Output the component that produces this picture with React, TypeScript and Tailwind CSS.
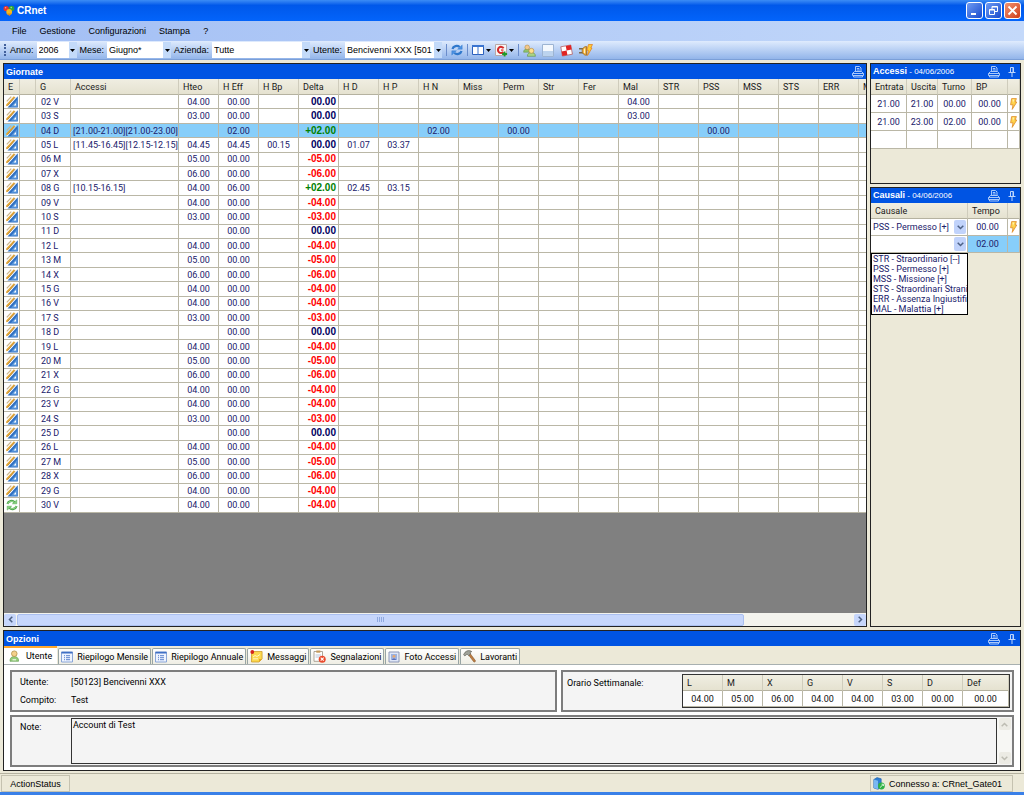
import { useState } from 'react';
import type { ReactNode } from 'react';

type Tone = 'navy' | 'red' | 'green';

interface Day {
  day: string;
  punches?: string;
  teo?: string;
  eff: string;
  delta: string;
  extra?: Record<string, string>;
}

const HEADERS = ['Hteo', 'H Eff', 'H Bp', 'Delta', 'H D', 'H P', 'H N', 'Miss', 'Perm', 'Str', 'Fer', 'Mal', 'STR', 'PSS', 'MSS', 'STS', 'ERR', 'M'];

const DAYS: Day[] = [
  { day: '02 V', teo: '04.00', eff: '00.00', delta: '00.00', extra: { Mal: '04.00' } },
  { day: '03 S', teo: '03.00', eff: '00.00', delta: '00.00', extra: { Mal: '03.00' } },
  { day: '04 D', punches: '[21.00-21.00][21.00-23.00]', eff: '02.00', delta: '+02.00', extra: { 'H N': '02.00', Perm: '00.00', PSS: '00.00' } },
  { day: '05 L', punches: '[11.45-16.45][12.15-12.15]', teo: '04.45', eff: '04.45', delta: '00.00', extra: { 'H Bp': '00.15', 'H D': '01.07', 'H P': '03.37' } },
  { day: '06 M', teo: '05.00', eff: '00.00', delta: '-05.00' },
  { day: '07 X', teo: '06.00', eff: '00.00', delta: '-06.00' },
  { day: '08 G', punches: '[10.15-16.15]', teo: '04.00', eff: '06.00', delta: '+02.00', extra: { 'H D': '02.45', 'H P': '03.15' } },
  { day: '09 V', teo: '04.00', eff: '00.00', delta: '-04.00' },
  { day: '10 S', teo: '03.00', eff: '00.00', delta: '-03.00' },
  { day: '11 D', eff: '00.00', delta: '00.00' },
  { day: '12 L', teo: '04.00', eff: '00.00', delta: '-04.00' },
  { day: '13 M', teo: '05.00', eff: '00.00', delta: '-05.00' },
  { day: '14 X', teo: '06.00', eff: '00.00', delta: '-06.00' },
  { day: '15 G', teo: '04.00', eff: '00.00', delta: '-04.00' },
  { day: '16 V', teo: '04.00', eff: '00.00', delta: '-04.00' },
  { day: '17 S', teo: '03.00', eff: '00.00', delta: '-03.00' },
  { day: '18 D', eff: '00.00', delta: '00.00' },
  { day: '19 L', teo: '04.00', eff: '00.00', delta: '-04.00' },
  { day: '20 M', teo: '05.00', eff: '00.00', delta: '-05.00' },
  { day: '21 X', teo: '06.00', eff: '00.00', delta: '-06.00' },
  { day: '22 G', teo: '04.00', eff: '00.00', delta: '-04.00' },
  { day: '23 V', teo: '04.00', eff: '00.00', delta: '-04.00' },
  { day: '24 S', teo: '03.00', eff: '00.00', delta: '-03.00' },
  { day: '25 D', eff: '00.00', delta: '00.00' },
  { day: '26 L', teo: '04.00', eff: '00.00', delta: '-04.00' },
  { day: '27 M', teo: '05.00', eff: '00.00', delta: '-05.00' },
  { day: '28 X', teo: '06.00', eff: '00.00', delta: '-06.00' },
  { day: '29 G', teo: '04.00', eff: '00.00', delta: '-04.00' },
  { day: '30 V', teo: '04.00', eff: '00.00', delta: '-04.00' },
];

const WEEK = [
  ['L', '04.00'], ['M', '05.00'], ['X', '06.00'], ['G', '04.00'],
  ['V', '04.00'], ['S', '03.00'], ['D', '00.00'], ['Def', '00.00'],
];

const CAUSALI = [
  'STR - Straordinario [--]',
  'PSS - Permesso [+]',
  'MSS - Missione [+]',
  'STS - Straordinari Strani',
  'ERR - Assenza Ingiustifi',
  'MAL - Malattia [+]',
];

const TONES: Record<Tone, string> = {
  navy: 'text-[#000060]',
  red: 'text-[#ff0000]',
  green: 'text-[#008000]',
};

function toneOf(delta: string): Tone {
  if (delta.startsWith('-')) return 'red';
  if (delta.startsWith('+')) return 'green';
  return 'navy';
}

/* ---------- icons ---------- */

const LogoIcon = () => (
  <svg width="12" height="12" viewBox="0 0 12 12">
    <circle cx="3.2" cy="3.6" r="2.7" fill="#e8352a" />
    <circle cx="8.6" cy="3.4" r="2.7" fill="#2fa53a" />
    <circle cx="6.2" cy="7" r="2.9" fill="#f5b81c" />
    <path d="M4 8.5h4.5L6.4 11z" fill="#e08a10" />
    <circle cx="2.6" cy="2.8" r=".8" fill="#ff9c8c" />
    <circle cx="8.2" cy="2.6" r=".8" fill="#9fe08c" />
  </svg>
);

const EditIcon = () => (
  <svg width="12" height="12" viewBox="0 0 12 12" className="block">
    <path d="M11.8.3v11.300H1.500z" fill="#2f70c2" />
    <path d="M11 4v6.800H5z" fill="#5b98dc" />
    <path d="M10 7v2.600H7.600z" fill="#fff" />
    <path d="m.3 9.800 9-9.500.7.700-8.500 10z" fill="#fff" />
    <path d="M.2 8.400 7.800.3l1.300 1-7.400 8.500-1.500.4z" fill="#e5a630" />
    <path d="M1.700 9.600 9 1.400" stroke="#8a6434" strokeWidth=".6" />
    <path d="M.3 5 4.800.3l.9.700L1.200 5.700z" fill="#c9b48c" />
  </svg>
);

const RecycleIcon = () => (
  <svg width="12" height="12" viewBox="0 0 12 12" className="block" fill="none" stroke="#4fa84f">
    <path d="M1.5 5C2.2 2 6.4.9 8.6 3.2M10.5 7C9.8 10 5.6 11.1 3.4 8.8" strokeWidth="2.2" />
    <path d="M1.8 4.9C2.6 2.4 6.2 1.4 8.3 3.4M10.2 7.1C9.4 9.6 5.8 10.6 3.7 8.6" stroke="#a5e09a" strokeWidth="1" />
    <path d="M6.4 4.8h4.4V.9zM5.6 7.2H1.2v3.9z" fill="#86cf7c" strokeWidth=".5" />
  </svg>
);

const RefreshIcon = () => (
  <svg width="12" height="12" viewBox="0 0 12 12" fill="none" stroke="#2f78cc">
    <path d="M1.5 5C2.2 1.900 6.400 1 8.700 3M10.500 7C9.800 10.100 5.600 11 3.300 9" strokeWidth="2.200" />
    <path d="M6.600 5.200h4.600V.9zM5.400 6.800H.8v4.300z" fill="#4b90e2" strokeWidth=".4" />
  </svg>
);

const PrinterIcon = () => (
  <svg width="12" height="12" viewBox="0 0 12 12" fill="none" stroke="#a9c8fa" strokeWidth="1">
    <path d="M3.5 5.5v-5h4l1.500 1.500v3.500M4.800 2.500h2.500M4.800 4h3" />
    <path d="M2.500 5.500h7l2 2v2h-11v-2zM.5 7.500h11M1.500 9.500v1.500h9V9.500" />
  </svg>
);

const PinIcon = () => (
  <svg width="8" height="12" viewBox="0 0 8 12" fill="none" stroke="#bcd5fc">
    <path d="M2.500 1.500h3v5h-3zM5 2v4M.5 6.500h7M4 7v4" />
  </svg>
);

const BoltIcon = () => (
  <svg width="9" height="12" viewBox="0 0 9 12" className="block">
    <path d="M2.600.6h4.800L6.200 4h1.600L3.200 11.400l.8-4.600H1.600z" fill="#ffd24a" stroke="#dd8a2a" strokeWidth=".8" />
    <path d="M3.500 1.500h1.800L4 5z" fill="#fff3b0" />
  </svg>
);

const ColumnsIcon = () => (
  <svg width="12" height="12" viewBox="0 0 12 12">
    <path d="M.5 1.500h11v9H.5z" fill="#fff" stroke="#2b60bd" />
    <path d="M0 1h12v2H0zM5.500 3h1v8h-1z" fill="#3a74d0" />
  </svg>
);

const ReportIcon = () => (
  <svg width="13" height="13" viewBox="0 0 13 13">
    <path d="M.5.5h11v11H.5z" fill="#f6f6f6" stroke="#b8a8a8" />
    <path d="M8.600 4.200A3.100 3.100 0 1 0 8.400 8" fill="none" stroke="#d42a2a" strokeWidth="2" />
    <path d="M6 5.200h2.500V7H6z" fill="#e66" />
    <path d="M9.600 7.500v5M7.100 10h5" stroke="#1f9a2c" strokeWidth="1.800" />
  </svg>
);

const UsersIcon = () => (
  <svg width="13" height="13" viewBox="0 0 13 13">
    <path d="M.6 8.200C.6 5.500 2.500 5 4.200 5s3.600.6 3.600 3.200z" fill="#8fc36b" stroke="#5f8f45" strokeWidth=".5" />
    <circle cx="4.200" cy="3.300" r="2.300" fill="#f2c98c" stroke="#b0803a" strokeWidth=".5" />
    <path d="M4.400 12.300c0-3 2-3.800 4-3.800s4 .8 4 3.800z" fill="#a9d486" stroke="#5f8f45" strokeWidth=".6" />
    <circle cx="8.400" cy="6.800" r="2.500" fill="#ffe08c" stroke="#b0803a" strokeWidth=".6" />
  </svg>
);

const PageIcon = () => (
  <svg width="12" height="13" viewBox="0 0 12 13">
    <path d="M.5.5h11v12H.5z" fill="#f4f8fd" stroke="#9db4d2" />
    <path d="M1 7h10v5H1z" fill="#bcd3ee" />
  </svg>
);

const DiceIcon = () => (
  <svg width="13" height="13" viewBox="0 0 13 13">
    <path d="m.8 2.800 10-1.800 1.600 9.200-10 1.800z" fill="#fff" stroke="#a33" strokeWidth=".6" />
    <path d="m5.800 1.900 5-.9.800 4.600-5 .9zM1.600 7.400l5-.9.800 4.600-5 .9z" fill="#e02424" />
  </svg>
);

const PlugIcon = () => (
  <svg width="14" height="13" viewBox="0 0 14 13">
    <path d="M0 4.800h4M0 8.800h4" stroke="#7a6a50" strokeWidth="1.400" />
    <path d="M7.500 2.500a4.300 4.300 0 1 0 0 8.800z" fill="#f0b03c" stroke="#9a6820" strokeWidth=".8" />
    <path d="M5.500 4.500v4.700" stroke="#fff0c0" strokeWidth="1.200" />
    <path d="M9.500.5h4L11.800 4H13l-4.500 7.500.8-5.200H7.800z" fill="#ffcc33" stroke="#e07a1c" strokeWidth=".7" />
  </svg>
);

const UserIcon = () => (
  <svg width="11" height="12" viewBox="0 0 11 12">
    <path d="M1 11.300C.8 7.600 3 6.600 5.200 6.600s4.600 1 4.300 4.700z" fill="#96cc7c" stroke="#5b9a48" strokeWidth=".6" />
    <circle cx="5.300" cy="3.700" r="2.800" fill="#f4d08c" stroke="#a8883c" strokeWidth=".7" />
    <path d="M3.500 9.300h3.600v1H3.500z" fill="#fff" />
  </svg>
);

const ListIcon = () => (
  <svg width="12" height="12" viewBox="0 0 12 12">
    <path d="M.5 1h11v10H.5z" fill="#eef4ff" stroke="#8aa6d8" />
    <path d="M.5.800h11v1.700H.5z" fill="#3f6fc4" />
    <path d="M3 4.700h1M3 6.700h1M3 8.700h1M5 4.700h4M5 6.700h4M5 8.700h4" stroke="#5a82cc" />
  </svg>
);

const NoteIcon = () => (
  <svg width="13" height="13" viewBox="0 0 13 13">
    <path d="M1.500 1.500h10.600v7.400L9 12H1.500z" fill="#fbd84e" stroke="#c8941e" strokeWidth=".7" />
    <path d="M12 9 9 12V9z" fill="#e6a626" />
    <path d="M3 7 5 5.500 7 6.500l3-2M3 8.800h5" stroke="#fff6c8" fill="none" />
    <circle cx="2.300" cy="2" r="1.900" fill="#d4231c" />
  </svg>
);

const ClipboardIcon = () => (
  <svg width="13" height="13" viewBox="0 0 13 13">
    <path d="M1 1.500h8.500v9.800H1z" fill="#fff" stroke="#9a8f80" strokeWidth=".8" />
    <path d="M3.300.500h4v2.200h-4z" fill="#c59a5a" />
    <path d="M2.500 5h5.500M2.500 7h4" stroke="#b8c4d8" />
    <circle cx="9.200" cy="9.200" r="3.500" fill="#ea4a2c" />
    <path d="m7.700 7.700 3 3M10.700 7.700l-3 3" stroke="#fff" strokeWidth="1.100" />
  </svg>
);

const PhotoIcon = () => (
  <svg width="12" height="12" viewBox="0 0 12 12">
    <path d="M1 1h10v10H1z" fill="#dfe7f8" stroke="#8d98b8" />
    <path d="M3 3h6v6H3z" fill="#9db2e0" />
    <circle cx="6" cy="5.300" r="1.400" fill="#e8a870" />
    <path d="M3.800 9C4 6.900 8 6.900 8.200 9z" fill="#5b6fb8" />
  </svg>
);

const HammerIcon = () => (
  <svg width="13" height="13" viewBox="0 0 13 13">
    <path d="m5 4.200 1.600-1.400 5.800 7.800c.4 1-.9 2-1.700 1.200z" fill="#bd7d42" stroke="#7b4d22" strokeWidth=".5" />
    <path d="M.6 4.600 2 2.300C4 .3 6.800.1 8.800 1.600L7 2.600l.6 1.200-2 1.900-1.500-1.600L1.800 6z" fill="#9fa29a" stroke="#55574f" strokeWidth=".6" />
  </svg>
);

const ServerIcon = () => (
  <svg width="12" height="13" viewBox="0 0 12 13">
    <path d="M.800 2.500 4 .600l4.200 1.200v8.400L5 12.300.8 11z" fill="#2f7fd4" stroke="#1e5ca8" strokeWidth=".6" />
    <path d="M.8 2.500 5 3.700v8.600L.8 11z" fill="#7ab8f2" />
    <circle cx="8.400" cy="9" r="3.400" fill="#2fb044" />
    <path d="m6.900 10.700 3.400-3.400M8.600 7.200h1.800V9" stroke="#d8f7d8" fill="none" />
  </svg>
);

const Caret = () => (
  <svg width="5" height="3" viewBox="0 0 5 3"><path d="M0 0h5L2.500 3z" fill="#000" /></svg>
);

const Chevron = ({ className = '', color = '#4d6185' }: { className?: string; color?: string }) => (
  <svg width="7" height="5" viewBox="0 0 7 5" className={className}>
    <path d="m.7.7 2.800 2.800L6.300.7" fill="none" stroke={color} strokeWidth="1.500" />
  </svg>
);

/* ---------- building blocks ---------- */

function PaneTitle({ title, date, pin = true }: { title: string; date?: string; pin?: boolean }) {
  return (
    <div className="flex h-[15px] shrink-0 items-center gap-2 bg-[#0054e3] pr-[2px] pl-[2px] text-white">
      <h2 className="flex-1 text-[9px] leading-3 font-bold whitespace-nowrap">
        {title}
        {date && <span className="text-[8px] font-normal"> - {date}</span>}
      </h2>
      <button aria-label="Stampa"><PrinterIcon /></button>
      {pin && <button aria-label="Blocca" className="mr-[2px]"><PinIcon /></button>}
    </div>
  );
}

function ToolbarSelect({ label, value, width }: { label: string; value: string; width: string }) {
  return (
    <label className="flex h-4 items-center gap-[3px] whitespace-nowrap">
      {label}
      <span className={`flex h-4 items-center bg-white ${width}`}>
        <select className="h-4 min-w-0 flex-1 appearance-none bg-white pl-[2px] leading-4 outline-none">
          <option>{value}</option>
        </select>
        <span className="pointer-events-none flex h-4 w-2 shrink-0 items-center justify-center bg-[#c3daf9]"><Caret /></span>
      </span>
    </label>
  );
}

function CausaleSelect({ value, label }: { value: string; label: string }) {
  return (
    <div className="flex h-full items-center">
      <select aria-label={label} defaultValue={value} className="h-4 min-w-0 flex-1 appearance-none bg-white pl-[2px] leading-4 outline-none">
        <option>{value}</option>
      </select>
      <span className="pointer-events-none mr-[1px] flex h-[14px] w-3 shrink-0 items-center justify-center rounded-[2px] bg-[#c1d3fb]"><Chevron /></span>
    </div>
  );
}

const Separator = () => <span className="mx-1 h-3 w-px bg-[#6a8ccb]" />;

const SMALL = 'font-[Roboto,Arial,sans-serif] text-[9px]';
const TH = 'border-r border-b border-r-[#cfccbc] border-b-[#b5b2a0] bg-linear-to-b from-[#f0eee2] to-[#e5e2d0] p-0 pl-1 text-left font-normal text-[#1a1a1a] overflow-hidden';
const TD = 'border-r border-b border-[#bab7a6] p-0 overflow-hidden';

function DaysTable() {
  return (
    <table className={`${SMALL} h-[434px] w-[895px] table-fixed border-separate border-spacing-0 leading-3 whitespace-nowrap text-[#20206a]`}>
      <colgroup>
        <col className="w-4" /><col className="w-4" /><col className="w-[35px]" /><col className="w-[108px]" />
        {HEADERS.map(h => <col key={h} className="w-10" />)}
      </colgroup>
      <thead>
        <tr className="h-4">
          <th className={TH}>E</th><th className={TH} /><th className={TH}>G</th><th className={TH}>Accessi</th>
          {HEADERS.map(h => <th key={h} className={TH}>{h}</th>)}
        </tr>
      </thead>
      <tbody>
        {DAYS.map(d => (
          <tr key={d.day} className={d.day === '04 D' ? 'bg-[#87cefa]' : 'bg-white'}>
            <td className={`${TD} pl-[2px]`}>{d.day === '30 V' ? <RecycleIcon /> : <EditIcon />}</td>
            <td className={TD} />
            <td className={`${TD} pl-[5px]`}>{d.day}</td>
            <td className={`${TD} pl-[2px]`}>{d.punches}</td>
            {HEADERS.map(h => {
              if (h === 'Delta') {
                return <td key={h} className={`${TD} pr-[2px] text-right font-['Liberation_Sans',Arial,sans-serif] text-[10px] font-bold ${TONES[toneOf(d.delta)]}`}>{d.delta}</td>;
              }
              const v = h === 'Hteo' ? d.teo : h === 'H Eff' ? d.eff : d.extra?.[h];
              return <td key={h} className={`${TD} text-center`}>{v}</td>;
            })}
          </tr>
        ))}
      </tbody>
    </table>
  );
}

const TABS: { label: string; icon: ReactNode }[] = [
  { label: 'Utente', icon: <UserIcon /> },
  { label: 'Riepilogo Mensile', icon: <ListIcon /> },
  { label: 'Riepilogo Annuale', icon: <ListIcon /> },
  { label: 'Messaggi', icon: <NoteIcon /> },
  { label: 'Segnalazioni', icon: <ClipboardIcon /> },
  { label: 'Foto Accessi', icon: <PhotoIcon /> },
  { label: 'Lavoranti', icon: <HammerIcon /> },
];

const BOX = 'border-2 border-[#7d7d7d] bg-[#f4f4f4]';
const WINBTN = 'flex h-[17px] w-[17px] items-center justify-center rounded-[3px] border border-white';

export default function App() {
  const [tab, setTab] = useState('Utente');
  const [notes, setNotes] = useState('Account di Test');

  return (
    <div className="flex min-h-screen flex-col overflow-hidden bg-[#ece9d8] font-['Liberation_Sans',Arial,sans-serif] text-[9px] leading-3 text-black">

      {/* Title bar */}
      <header className="flex h-[21px] items-center gap-[2px] bg-linear-to-b from-[#3b8cf5] via-[#0058ea] via-25% to-[#0364fb] px-[3px]">
        <LogoIcon />
        <h1 className="flex-1 text-[10px] font-bold text-white">CRnet</h1>
        <div className="flex gap-[2px]">
          <button aria-label="Riduci" className={`${WINBTN} bg-linear-to-br from-[#6f9af2] to-[#1b49cd]`}>
            <svg width="11" height="11" viewBox="0 0 11 11"><path d="M2 8h5v2H2z" fill="#fff" /></svg>
          </button>
          <button aria-label="Ripristina" className={`${WINBTN} bg-linear-to-br from-[#6f9af2] to-[#1b49cd]`}>
            <svg width="11" height="11" viewBox="0 0 11 11" fill="none" stroke="#fff"><path d="M4 4V1.500h5.500v5H7M4 2h5.500M1.500 4.500h5v5h-5zM1.500 5h5" /></svg>
          </button>
          <button aria-label="Chiudi" className={`${WINBTN} bg-linear-to-br from-[#f0916f] to-[#cf3a12]`}>
            <svg width="11" height="11" viewBox="0 0 11 11"><path d="m1.500 1.500 8 8m0-8-8 8" stroke="#fff" strokeWidth="1.800" /></svg>
          </button>
        </div>
      </header>

      {/* Menu */}
      <nav className="flex h-5 items-center gap-[13px] bg-linear-to-r from-[#a3bff4] to-[#c4d9fa] pl-3">
        {['File', 'Gestione', 'Configurazioni', 'Stampa', '?'].map(m => <button key={m}>{m}</button>)}
      </nav>

      {/* Toolbar */}
      <div className="flex h-[19px] items-center border-b border-[#7b9fd8] bg-linear-to-b from-[#dfebfd] to-[#93b5ea] pl-1">
        <span className="mr-1 h-3 border-l-2 border-dotted border-[#41609c]" />
        <div className="flex items-center gap-[3px]">
          <ToolbarSelect label="Anno:" value="2006" width="w-10" />
          <ToolbarSelect label="Mese:" value="Giugno*" width="w-[64px]" />
          <ToolbarSelect label="Azienda:" value="Tutte" width="w-[98px]" />
          <ToolbarSelect label="Utente:" value="Bencivenni XXX [501" width="w-[97px]" />
        </div>
        <Separator />
        <button aria-label="Aggiorna"><RefreshIcon /></button>
        <Separator />
        <div className="flex items-center gap-1">
          <button aria-label="Colonne" className="flex items-center gap-[2px]"><ColumnsIcon /><Caret /></button>
          <button aria-label="Report" className="flex items-center gap-px"><ReportIcon /><Caret /></button>
        </div>
        <Separator />
        <div className="flex items-center gap-[6px]">
          <button aria-label="Utenti"><UsersIcon /></button>
          <button aria-label="Pagina"><PageIcon /></button>
          <button aria-label="Turni"><DiceIcon /></button>
          <button aria-label="Connessione"><PlugIcon /></button>
        </div>
      </div>

      {/* Work area */}
      <main className="flex flex-1 flex-col gap-[3px] px-[3px] pt-[3px] pb-[2px]">
        <div className="flex flex-1 gap-[3px]">
          <section className="flex min-w-0 flex-1 flex-col border border-[#222] bg-[#808080]">
            <PaneTitle title="Giornate" pin={false} />
            <div className="flex-1 overflow-hidden">
              <DaysTable />
            </div>
            {/* Horizontal scrollbar */}
            <div className="flex h-[13px] items-center gap-px bg-[#f3f3ee]">
              <button aria-label="Scorri a sinistra" className="flex h-3 w-3 items-center justify-center rounded-[2px] bg-[#c6d6fb]"><Chevron className="rotate-90" /></button>
              <div className="flex h-3 flex-1">
                <div className="flex w-[87%] items-center justify-center gap-px rounded-[2px] border border-[#aabff0] bg-[#c6d6fc]">
                  {[0, 1, 2, 3].map(i => <span key={i} className="h-[5px] w-px bg-[#8fa9e0]" />)}
                </div>
              </div>
              <button aria-label="Scorri a destra" className="flex h-3 w-3 items-center justify-center rounded-[2px] bg-[#c6d6fb]"><Chevron className="-rotate-90" /></button>
            </div>
          </section>

          <aside className="flex w-[151px] shrink-0 flex-col gap-[3px]">
            <section className="h-[121px] border border-[#222]">
              <PaneTitle title="Accessi" date="04/06/2006" />
              <table className={`${SMALL} w-full table-fixed border-separate border-spacing-0 leading-3 text-[#20206a]`}>
                <colgroup><col className="w-9" /><col className="w-[31px]" /><col className="w-[34px]" /><col className="w-9" /><col /></colgroup>
                <thead>
                  <tr className="h-4">
                    {['Entrata', 'Uscita', 'Turno', 'BP', ''].map(h => <th key={h} className={TH}>{h}</th>)}
                  </tr>
                </thead>
                <tbody className="bg-white text-center">
                  {[['21.00', '21.00', '00.00', '00.00'], ['21.00', '23.00', '02.00', '00.00'], ['', '', '', '']].map((row, i) => (
                    <tr key={i} className="h-[18px]">
                      {row.map((v, j) => <td key={j} className={TD}>{v}</td>)}
                      <td className={`${TD} pl-px`}>{row[0] && <BoltIcon />}</td>
                    </tr>
                  ))}
                </tbody>
              </table>
            </section>

            <section className="flex-1 border border-[#222]">
              <PaneTitle title="Causali" date="04/06/2006" />
              <div className={`${SMALL} relative leading-3`}>
                <table className="w-full table-fixed border-separate border-spacing-0 text-[#20206a]">
                  <colgroup><col className="w-[97px]" /><col className="w-10" /><col /></colgroup>
                  <thead>
                    <tr className="h-4"><th className={TH}>Causale</th><th className={TH}>Tempo</th><th className={TH} /></tr>
                  </thead>
                  <tbody className="text-center">
                    <tr className="h-[17px] bg-white">
                      <td className={TD}><CausaleSelect label="Causale 1" value="PSS - Permesso [+]" /></td>
                      <td className={TD}>00.00</td>
                      <td className={`${TD} pl-px`}><BoltIcon /></td>
                    </tr>
                    <tr className="h-[17px] bg-[#87cefa]">
                      <td className={`${TD} bg-white`}><CausaleSelect label="Causale 2" value="" /></td>
                      <td className={TD}>02.00</td>
                      <td className={TD} />
                    </tr>
                  </tbody>
                </table>
                <ul role="listbox" aria-label="Causali" className="absolute top-full left-0 w-[97px] overflow-hidden border border-black bg-white pl-px leading-[10px] whitespace-nowrap text-[#20206a]">
                  {CAUSALI.map(c => <li key={c} role="option" aria-selected={false}>{c}</li>)}
                </ul>
              </div>
            </section>
          </aside>
        </div>

        {/* Options */}
        <section className="border border-[#222]">
          <PaneTitle title="Opzioni" />
          <div role="tablist" className={`${SMALL} flex h-[19px] items-end gap-px border-b border-[#a8b0b0] leading-3`}>
            {TABS.map(t => (
              <button key={t.label} role="tab" aria-selected={tab === t.label} onClick={() => setTab(t.label)}
                className={tab === t.label
                  ? 'flex h-[18px] items-center gap-[6px] border-t-2 border-[#ffa82e] bg-white px-[5px] whitespace-nowrap'
                  : 'flex h-4 items-center gap-1 rounded-t-[2px] border border-b-0 border-[#98a5a5] bg-linear-to-b from-white to-[#efeee4] px-[2px] whitespace-nowrap'}>
                {t.icon}{t.label}
              </button>
            ))}
          </div>
          <div className={`${SMALL} flex flex-col gap-[3px] bg-white px-[6px] pt-[5px] pb-[3px] leading-3`}>
            <div className="flex gap-1">
              <dl className={`${BOX} grid min-w-0 flex-1 grid-cols-[51px_1fr] items-center px-2 py-px`}>
                <dt>Utente:</dt><dd>[50123] Bencivenni XXX</dd>
                <dt>Compito:</dt><dd>Test</dd>
              </dl>
              <div className={`${BOX} flex w-[453px] justify-between p-[2px] pl-1`}>
                <span className="pt-[3px]">Orario Settimanale:</span>
                <table className="w-[328px] table-fixed border-separate border-spacing-0 border border-[#333] text-[#111]">
                  <colgroup>{WEEK.map(([d]) => <col key={d} className={d === 'Def' ? '' : 'w-10'} />)}</colgroup>
                  <thead><tr className="h-4">{WEEK.map(([d]) => <th key={d} className={TH}>{d}</th>)}</tr></thead>
                  <tbody><tr className="h-4 bg-white text-center">{WEEK.map(([d, v]) => <td key={d} className={TD}>{v}</td>)}</tr></tbody>
                </table>
              </div>
            </div>
            <div className={`${BOX} flex h-[52px] p-px`}>
              <label htmlFor="note" className="w-[58px] pt-[3px] pl-[7px]">Note:</label>
              <textarea id="note" value={notes} onChange={e => setNotes(e.target.value)}
                className="block min-w-0 flex-1 resize-none overflow-hidden border border-[#333] bg-[#f4f4f4] px-px outline-none" />
              <div className="flex w-[14px] flex-col items-center justify-between bg-[#f7f7f4] pl-px">
                <button aria-label="Su" className="flex h-3 w-3 items-center justify-center rounded-[2px] bg-[#ecebe4]"><Chevron className="rotate-180" color="#bdbcb2" /></button>
                <button aria-label="Giù" className="flex h-3 w-3 items-center justify-center rounded-[2px] bg-[#ecebe4]"><Chevron color="#bdbcb2" /></button>
              </div>
            </div>
          </div>
        </section>
      </main>

      {/* Status bar */}
      <footer className="flex h-[22px] items-stretch justify-between border-t border-b-[3px] border-t-[#b5b2a0] border-b-[#3a80e8] px-px pt-px">
        <span className="flex w-[69px] items-center justify-center border border-[#c5c2b0]">ActionStatus</span>
        <span className="mr-[10px] flex w-[143px] items-center gap-1 border border-[#c5c2b0] pl-[2px]"><ServerIcon />Connesso a: CRnet_Gate01</span>
      </footer>
    </div>
  );
}
